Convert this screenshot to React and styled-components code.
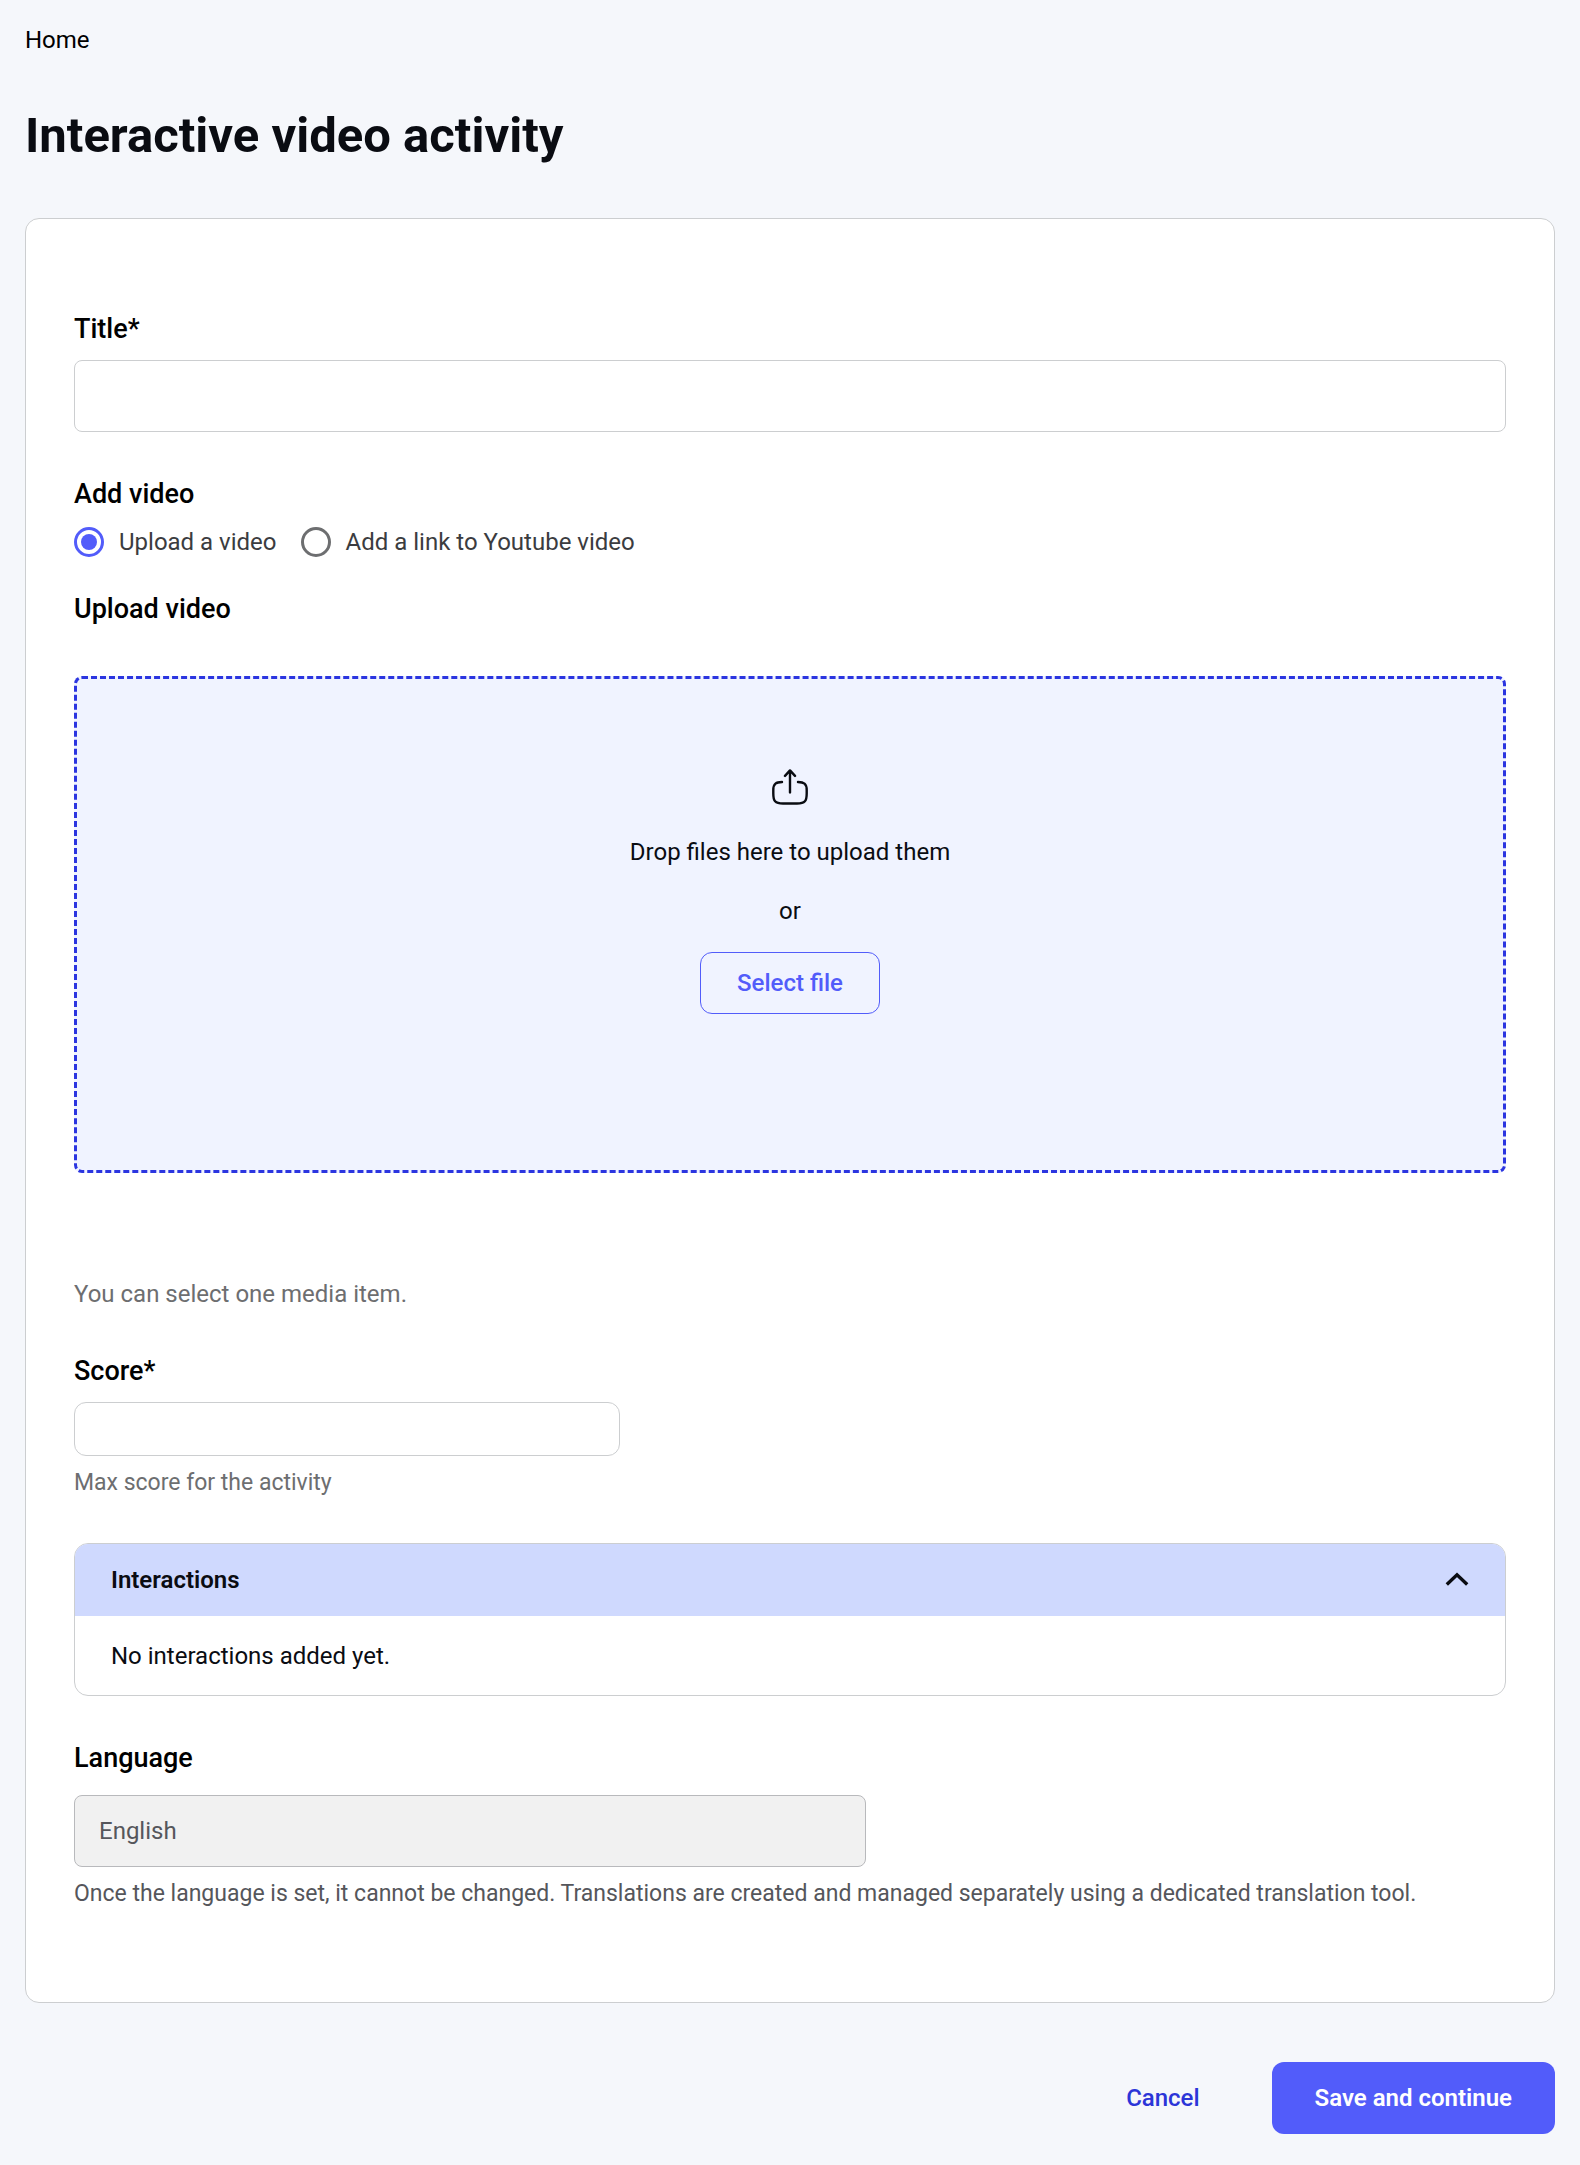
import React, { useState } from 'react'
import styled, { createGlobalStyle, css } from 'styled-components';

const GlobalStyle = createGlobalStyle`
  * {
    box-sizing: border-box;
  }
  body {
    margin: 0;
    background: #f5f7fb;
    color: #0a0c12;
    font-family: Roboto, "Liberation Sans", sans-serif;
    font-size: 24px;
    line-height: 36px;
  }
  button, input {
    font: inherit;
  }
`;

const Page = styled.div`
  padding: 22px 25px 31px;
`;
const Breadcrumb = styled.a`
  display: block;
  width: fit-content;
  color: #000;
  text-decoration: none;
`;
const Heading = styled.h1`
  margin: 48px 0 52px;
  font-size: 49px;
  font-weight: 700;
  line-height: 60px;
`;
const Card = styled.main`
  display: flex;
  flex-direction: column;
  gap: 42px;
  padding: 90px 48px;
  background: #fff;
  border: 1px solid #ccced0;
  border-radius: 14px;
`;
const Field = styled.div`
  display: flex;
  flex-direction: column;
  align-items: flex-start;
  min-width: 0;
`;
const labelStyle = css`
  display: block;
  padding: 0;
  color: #000;
  font-size: 27px;
  font-weight: 500;
  line-height: 40px;
`;
const Label = styled.label`
  ${labelStyle}
  margin-bottom: ${({ $gap }) => $gap || 11}px;
`;
const TextInput = styled.input`
  width: 100%;
  max-width: ${({ $maxWidth }) => ($maxWidth ? `${$maxWidth}px` : 'none')};
  height: ${({ $small }) => ($small ? 54 : 72)}px;
  padding: 0 24px;
  background: #fff;
  border: 1px solid #ccced0;
  border-radius: ${({ $small }) => ($small ? 12 : 8)}px;

  &:disabled {
    color: #55565b;
    background: #f1f1f1;
    border-color: #b8b9bc;
  }
`;
const Hint = styled.p`
  margin: 9px 0 0;
  color: ${({ $dark }) => ($dark ? '#55565b' : '#6d6e70')};
  font-size: ${({ $small }) => ($small ? 23 : 24)}px;
`;
const VideoSource = styled.fieldset`
  margin: 0;
  padding: 0;
  border: 0;
  min-width: 0;
`;
const Legend = styled.legend`
  ${labelStyle}
  margin-bottom: 10px;
`;
const Options = styled.div`
  display: flex;
  flex-wrap: wrap;
  gap: 24px;
`;
const Option = styled.label`
  display: flex;
  align-items: center;
  gap: 15px;
  color: #3b3c40;
`;
const Radio = styled.input`
  display: grid;
  place-content: center;
  appearance: none;
  width: 30px;
  height: 30px;
  margin: 0;
  border: 3px solid #6d6e70;
  border-radius: 50%;

  &:checked {
    border-color: #525cfa;
  }
  &:checked::before {
    content: "";
    width: 16px;
    height: 16px;
    border-radius: 50%;
    background: #525cfa;
  }
`;
const Upload = styled.section`
  display: flex;
  flex-direction: column;
  margin: -13px 0 -3px;
`;
const UploadTitle = styled.h2`
  ${labelStyle}
  margin: 0 0 47px;
`;
const DropZone = styled.div`
  display: flex;
  flex-direction: column;
  align-items: center;
  gap: 23px;
  min-height: 497px;
  margin-bottom: 94px;
  padding: 90px 24px;
  background: #f0f3ff;
  border: 3px dashed #2b35e0;
  border-radius: 8px;
`;
const IconBox = styled.div`
  display: flex;
  height: 42px;
`;
const DropText = styled.span`
  text-align: center;
`;
const OutlineButton = styled.button`
  height: 62px;
  padding: 0 36px;
  color: #525cfa;
  background: transparent;
  border: 1px solid #525cfa;
  border-radius: 12px;
  font-weight: 500;
`;
const Panel = styled.section`
  overflow: hidden;
  border: 1px solid #ccced0;
  border-radius: 14px;
`;
const PanelHeader = styled.button`
  display: flex;
  align-items: center;
  justify-content: space-between;
  width: 100%;
  height: 72px;
  padding: 0 36px;
  color: #0a0c12;
  background: #cfd9fe;
  border: 0;
  font-weight: 600;
`;
const PanelBody = styled.div`
  padding: 22px 36px 21px;
`;
const Chevron = styled.svg`
  transform: ${({ $open }) => ($open ? 'none' : 'rotate(180deg)')};
`;
const Actions = styled.footer`
  display: flex;
  align-items: center;
  justify-content: flex-end;
  gap: 72px;
  margin-top: 59px;
`;
const CancelLink = styled.a`
  color: #2b35d8;
  font-weight: 500;
  text-decoration: none;
`;
const SaveButton = styled.button`
  height: 72px;
  padding: 0 43px;
  color: #fff;
  background: #525cfa;
  border: 0;
  border-radius: 12px;
  font-weight: 600;
`;

const UploadIcon = () => (
  <svg width="36" height="36" viewBox="0 0 36 36" fill="none" stroke="#0a0c12" strokeWidth="2.4" strokeLinecap="round" strokeLinejoin="round" aria-hidden="true">
    <path d="M18 23.4V1.6M13 6.9L18 1.4l5 5.5" />
    <path d="M10 13C4.200 13.200 1.300 14.400 1.300 21v3.500C1.300 32 2.900 34.500 11 34.500h14c8.100 0 9.700-2.500 9.700-10V21c0-6.600-2.900-7.800-8.700-8" />
  </svg>
)

const InteractionsPanel = () => {
  const [open, setOpen] = useState(true);
  return (
    <Panel>
      <PanelHeader type="button" aria-expanded={open} onClick={() => setOpen(!open)}>
        Interactions
        <Chevron $open={open} width="24" height="16" viewBox="0 0 24 16" fill="none" stroke="#0a0c12" strokeWidth="3.4" aria-hidden="true">
          <path d="M1.800 12.500L12 2.800l10.200 9.700" />
        </Chevron>
      </PanelHeader>
      {open && <PanelBody>No interactions added yet.</PanelBody>}
    </Panel>
  )
}

const sources = [
  { value: "upload", label: "Upload a video" },
  { value: "youtube", label: "Add a link to Youtube video" },
];

const App = () => {
  const [title, setTitle] = useState("");
  const [source, setSource] = useState("upload");
  const [score, setScore] = useState("");

  return (
    <Page>
      <GlobalStyle />
      <Breadcrumb href="#home">Home</Breadcrumb>
      <Heading>Interactive video activity</Heading>
      <Card>
        <Field>
          <Label htmlFor="title">Title*</Label>
          <TextInput id="title" value={title} onChange={(e) => setTitle(e.target.value)} />
        </Field>
        <VideoSource>
          <Legend>Add video</Legend>
          <Options>
            {sources.map((item) => (
              <Option key={item.value}>
                <Radio
                  type="radio"
                  name="source"
                  checked={source === item.value}
                  onChange={() => setSource(item.value)}
                />
                {item.label}
              </Option>
            ))}
          </Options>
        </VideoSource>
        <Upload>
          <UploadTitle>Upload video</UploadTitle>
          <DropZone>
            <IconBox>
              <UploadIcon />
            </IconBox>
            <DropText>Drop files here to upload them</DropText>
            <DropText>or</DropText>
            <OutlineButton type="button">Select file</OutlineButton>
          </DropZone>
          <Hint>You can select one media item.</Hint>
        </Upload>
        <Field>
          <Label htmlFor="score">Score*</Label>
          <TextInput id="score" $small $maxWidth={546} value={score} onChange={(e) => setScore(e.target.value)} />
          <Hint $small>Max score for the activity</Hint>
        </Field>
        <InteractionsPanel />
        <Field>
          <Label htmlFor="language" $gap={17}>Language</Label>
          <TextInput id="language" $maxWidth={792} value="English" disabled readOnly />
          <Hint $small $dark>
            Once the language is set, it cannot be changed. Translations are created and managed separately using a dedicated translation tool.
          </Hint>
        </Field>
      </Card>
      <Actions>
        <CancelLink href="#cancel">Cancel</CancelLink>
        <SaveButton type="submit">Save and continue</SaveButton>
      </Actions>
    </Page>
  )
}

export default App
